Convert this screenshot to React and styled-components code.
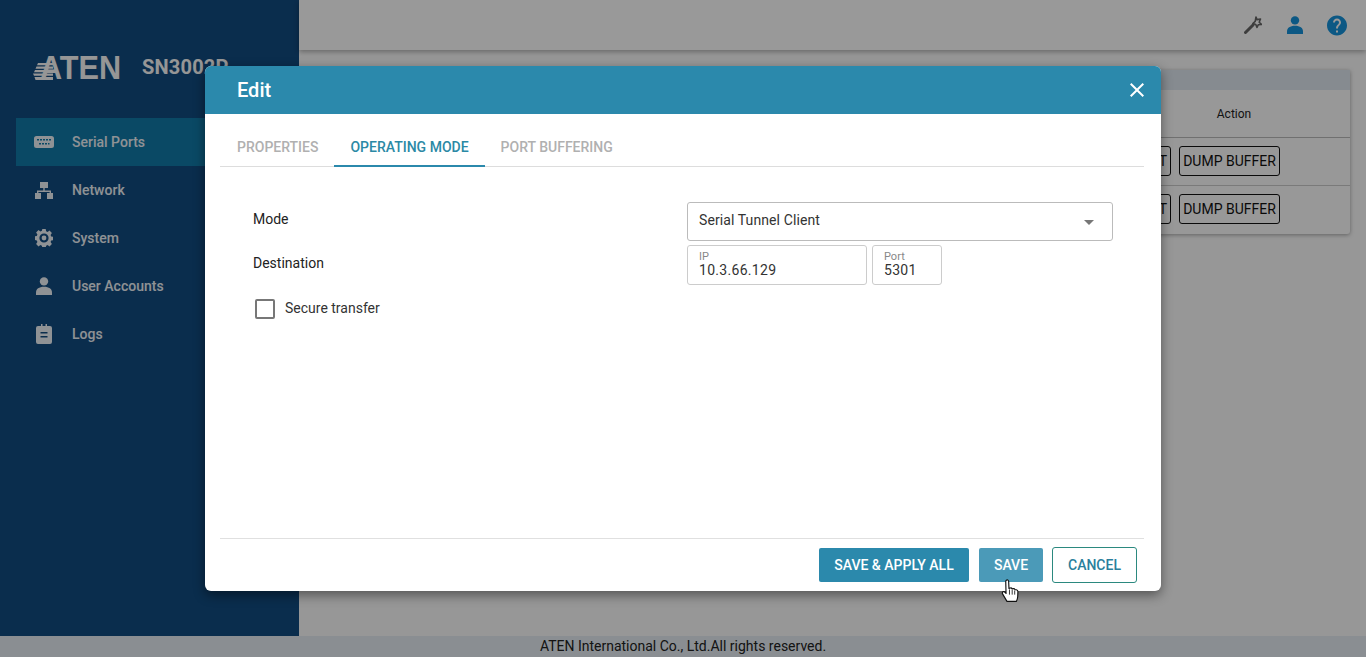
import React from "react";
import styled, { createGlobalStyle } from "styled-components";
import { MdHelp, MdClose, MdArrowDropDown } from "react-icons/md";

const Global = createGlobalStyle`
  html, body { margin: 0; padding: 0; height: 100%; overflow: hidden; }
  body { font-family: Roboto, "Liberation Sans", sans-serif; color: #222; background: #fff; }
  * { box-sizing: border-box; }
`;

const Page = styled.div`height: 657px; display: flex; flex-direction: column; position: relative; overflow: hidden;`;
const Body = styled.div`flex: 1; display: flex; min-height: 0;`;
const Sidebar = styled.aside`width: 299px; background: #124b80; color: #eef3f8; display: flex; flex-direction: column; padding: 0 0 0 16px;`;
const Brand = styled.div`height: 118px; flex: none; display: flex; align-items: center; padding: 16px 0 0 17px;`;
const LogoMark = styled.span`display: flex; align-items: center; width: 109px; color: #fafafa;`;
const LogoText = styled.span`display: inline-block; font: 700 34px/1 "Liberation Sans", sans-serif; margin-left: -13px; transform: scaleX(.9); transform-origin: left;`;
const LogoGlyph = styled.svg`margin-top: 8px; flex: none;`;
const Model = styled.span`font: 700 20px/1 Roboto, sans-serif; color: #fafafa; letter-spacing: .2px;`;
const Nav = styled.nav`display: flex; flex-direction: column;`;
const NavItem = styled.div`height: 48px; display: flex; align-items: center; padding-left: 17px; gap: 17px; font-size: 14px; font-weight: 500; background: ${p => p.$active ? "#127aa8" : "transparent"};`;
const NavIcon = styled.span`width: 22px; height: 24px; display: flex; align-items: center; justify-content: center;`;

const Main = styled.main`flex: 1; display: flex; flex-direction: column; min-width: 0; background: #fcfcfc;`;
const TopBar = styled.header`height: 50px; flex: none; background: #fff; box-shadow: 0 2px 5px rgba(0,0,0,.3); display: flex; justify-content: flex-end; align-items: center; padding-right: 17px; gap: 18px;`;
const TopIcon = styled.span`width: 24px; height: 24px; display: flex; align-items: center; justify-content: center; font-size: ${p => p.$size || 24}px; color: ${p => p.$color};`;
const Content = styled.div`padding: 20px 16px;`;
const Card = styled.section`background: #fdfdfd; box-shadow: 0 1px 4px rgba(0,0,0,.35); border-radius: 0 0 3px 3px;`;
const CardBand = styled.div`height: 20px; background: #dfe8f1;`;
const HeadRow = styled.div`height: 48px; display: flex; justify-content: flex-end; align-items: center; border-bottom: 1px solid #bbb; font-size: 12px; font-weight: 400;`;
const ActionHead = styled.span`width: 232px; text-align: center;`;
const BodyRow = styled.div`height: 48px; display: flex; justify-content: flex-end; align-items: center; gap: 8px; padding: 0 70px ${p => p.$last ? 2 : 1}px 0; border-bottom: ${p => p.$last ? "none" : "1px solid #ccc"};`;
const OutlineBtn = styled.button`height: 30px; padding: 0 3px; font: 400 14px Roboto, sans-serif; background: transparent; color: #111; border: 1px solid #111; border-radius: 3px; width: ${p => p.$w ? p.$w + "px" : "auto"};`;

const Footer = styled.footer`height: 21px; flex: none; background: #e6edf4; text-align: center; font-size: 14px; line-height: 21px; color: #222;`;
const Overlay = styled.div`position: absolute; inset: 0; background: rgba(0,0,0,.4);`;

const Modal = styled.div`position: absolute; left: 205px; top: 66px; width: 956px; height: 525px; background: #fff; border-radius: 6px; box-shadow: 0 4px 12px rgba(0,0,0,.45); display: flex; flex-direction: column; overflow: hidden;`;
const ModalHead = styled.div`height: 48px; flex: none; background: #2b89ac; color: #fff; display: flex; align-items: center; justify-content: space-between; padding: 0 12px 0 32px; font-size: 20px; font-weight: 500;`;
const CloseBox = styled.span`font-size: 24px; display: flex; align-items: center;`;
const Tabs = styled.div`margin: 0 17px 0 15px; height: 53px; flex: none; display: flex; align-items: flex-end; border-bottom: 1px solid #ddd;`;
const Tab = styled.div`height: 53px; margin-bottom: -1px; padding: 15px 16px 0; display: flex; align-items: center; font-size: 14px; font-weight: 500; text-transform: uppercase; color: ${p => p.$active ? "#2b89a5" : "#b0b0b0"}; border-bottom: 2px solid ${p => p.$active ? "#2b89ac" : "transparent"}; ${p => p.$first && "margin-left: 1px;"}`;
const Form = styled.div`flex: 1; padding: 35px 48px 0; display: flex; flex-direction: column;`;
const FormRow = styled.div`display: grid; grid-template-columns: 434px 426px; align-items: center; margin-bottom: 4px;`;
const FieldLabel = styled.label`font-size: 14px; color: #222; padding-bottom: 5px;`;
const SelectBox = styled.div`height: 39px; border: 1px solid #bbb; border-radius: 3px; display: flex; align-items: center; justify-content: space-between; padding: 0 11px 3px; font-size: 14px; letter-spacing: .1px; color: #333;`;
const Caret = styled.span`font-size: 24px; color: #777; display: flex; margin-top: 3px;`;
const Pair = styled.div`display: flex; gap: 5px;`;
const Input = styled.div`width: ${p => p.$w}px; height: 40px; border: 1px solid #ccc; border-radius: 3px; padding: 5px 11px 0; display: flex; flex-direction: column;`;
const InputLabel = styled.span`font-size: 11px; line-height: 11px; color: #888;`;
const InputValue = styled.span`font-size: 14px; line-height: 16px; letter-spacing: .3px; color: #333;`;
const CheckRow = styled.div`display: flex; align-items: center; gap: 10px; margin: 10px 0 0 2px; font-size: 14px; color: #333;`;
const Check = styled.span`width: 20px; height: 20px; border: 2px solid #777; border-radius: 2px;`;
const CheckText = styled.span`padding-bottom: 2px;`;
const ModalFoot = styled.div`margin: 0 17px 0 15px; height: 53px; flex: none; border-top: 1px solid #e0e0e0; display: flex; justify-content: flex-end; align-items: center; gap: 10px; padding: 0 7px 1px 0;`;
const Btn = styled.button`width: ${p => p.$w}px; height: 34px; border: 0; border-radius: 2px; background: ${p => p.$bg}; color: #fff; font: 500 14px Roboto, sans-serif; padding: 0;`;
const CancelBtn = styled.button`width: 85px; height: 36px; margin-left: -1px; border: 1px solid #2b897f; border-radius: 3px; background: #fff; color: #2b7f9c; font: 500 14px Roboto, sans-serif; padding: 0;`;
const Cursor = styled.svg`position: absolute; left: 1001px; top: 579px; width: 18px; height: 25px;`;

const SerialIcon = () => (
  <svg width="20" height="12" viewBox="0 0 20 12" fill="currentColor">
    <path fillRule="evenodd" d="M2.5 0h15A2.5 2.5 0 0 1 20 2.5v7a2.5 2.5 0 0 1-2.5 2.5h-15A2.5 2.5 0 0 1 0 9.5v-7A2.5 2.5 0 0 1 2.5 0ZM3 3v1.5h2V3Zm3 0v1.5h2V3Zm3 0v1.5h2V3Zm3 0v1.5h2V3Zm3 0v1.5h2V3ZM5 7v1.5h2V7Zm3 0v1.5h2V7Zm3 0v1.5h2V7Zm3 0v1.5h1.5V7Z" />
  </svg>
);
const NetworkIcon = () => (
  <svg width="18" height="17" viewBox="0 0 18 17" fill="currentColor">
    <path d="M5 0h8v6H5zM8.3 6h1.4v3H8.3zM2 8.5h14V11h-1.4V9.9H3.4V11H2zM0 11h6v6H0zM12 11h6v6h-6z" />
  </svg>
);
const GearIcon = () => (
  <svg width="18" height="18" viewBox="0 0 18 18" fill="currentColor">
    <path fillRule="evenodd" d="M7.3 0h3.4l.4 2.3 1.5.6 1.9-1.3 2.4 2.4-1.3 1.9.6 1.5 2.3.4v3.4l-2.3.4-.6 1.5 1.3 1.9-2.4 2.4-1.9-1.3-1.5.6-.4 2.3H7.3l-.4-2.3-1.5-.6-1.9 1.3-2.4-2.4 1.3-1.9-.6-1.5L-.5 10.7V7.3l2.3-.4.6-1.5-1.3-1.9 2.4-2.4 1.9 1.3 1.5-.6ZM9 4.4a4.6 4.6 0 1 0 0 9.2 4.6 4.6 0 0 0 0-9.2Z" />
    <circle cx="9" cy="9" r="2.4" />
  </svg>
);
const UserIcon = ({ size = 18 }) => (
  <svg width={size} height={size} viewBox="0 0 18 18" fill="currentColor">
    <circle cx="9" cy="4.4" r="4.2" />
    <path d="M1 18v-2.6C1 12 4 9.8 9 9.8s8 2.2 8 5.6V18Z" />
  </svg>
);
const ClipboardIcon = () => (
  <svg width="16" height="20" viewBox="0 0 16 20" fill="currentColor">
    <path fillRule="evenodd" d="M5 0h1.5v2h3V0H11v2h3a2 2 0 0 1 2 2v14a2 2 0 0 1-2 2H2a2 2 0 0 1-2-2V4a2 2 0 0 1 2-2h3Zm-.5 8v1.6h7V8Zm0 4v1.6h7V12Z" />
  </svg>
);
const WandIcon = () => (
  <svg width="18" height="18" viewBox="0 0 18 18" fill="none">
    <path d="M1.5 16.5 9 9" stroke="currentColor" strokeWidth="3" strokeLinecap="round" />
    <path d="M12 1l1 2.6 3.5-.6-1.3 3.2L17.5 8.5l-3.2.2L13 11.5l-1.2-3L8.8 7.5l2.4-2.2Z" stroke="currentColor" strokeWidth="1.6" strokeLinejoin="round" />
  </svg>
);
const LogoStripes = () => (
  <LogoGlyph width="20" height="17" viewBox="0 0 20 17" fill="currentColor">
    <path d="M5 0h15v2.2H4ZM3.5 3.5H20v2.2H2.5ZM2 7h18v2.2H1ZM0 10.5h20v2.2H1ZM1.5 14H20v3H2.5Z" />
  </LogoGlyph>
);

export default function App() {
  return (
    <Page>
      <Global />
      <Body>
        <Sidebar>
          <Brand>
            <LogoMark><LogoStripes /><LogoText>ATEN</LogoText></LogoMark>
            <Model>SN3002P</Model>
          </Brand>
          <Nav>
            <NavItem $active><NavIcon><SerialIcon /></NavIcon>Serial Ports</NavItem>
            <NavItem><NavIcon><NetworkIcon /></NavIcon>Network</NavItem>
            <NavItem><NavIcon><GearIcon /></NavIcon>System</NavItem>
            <NavItem><NavIcon><UserIcon /></NavIcon>User Accounts</NavItem>
            <NavItem><NavIcon><ClipboardIcon /></NavIcon>Logs</NavItem>
          </Nav>
        </Sidebar>
        <Main>
          <TopBar>
            <TopIcon $color="#666"><WandIcon /></TopIcon>
            <TopIcon $color="#1593dc"><UserIcon /></TopIcon>
            <TopIcon $color="#1593dc" $size={25}><MdHelp /></TopIcon>
          </TopBar>
          <Content>
            <Card>
              <CardBand />
              <HeadRow><ActionHead>Action</ActionHead></HeadRow>
              <BodyRow><OutlineBtn>RESET</OutlineBtn><OutlineBtn $w={101}>DUMP BUFFER</OutlineBtn></BodyRow>
              <BodyRow $last><OutlineBtn>RESET</OutlineBtn><OutlineBtn $w={101}>DUMP BUFFER</OutlineBtn></BodyRow>
            </Card>
          </Content>
        </Main>
      </Body>
      <Footer>ATEN International Co., Ltd.All rights reserved.</Footer>
      <Overlay />
      <Modal>
        <ModalHead>Edit<CloseBox><MdClose /></CloseBox></ModalHead>
        <Tabs>
          <Tab $first>Properties</Tab>
          <Tab $active>Operating Mode</Tab>
          <Tab>Port Buffering</Tab>
        </Tabs>
        <Form>
          <FormRow>
            <FieldLabel>Mode</FieldLabel>
            <SelectBox>Serial Tunnel Client<Caret><MdArrowDropDown /></Caret></SelectBox>
          </FormRow>
          <FormRow>
            <FieldLabel>Destination</FieldLabel>
            <Pair>
              <Input $w={180}><InputLabel>IP</InputLabel><InputValue>10.3.66.129</InputValue></Input>
              <Input $w={70}><InputLabel>Port</InputLabel><InputValue>5301</InputValue></Input>
            </Pair>
          </FormRow>
          <CheckRow><Check /><CheckText>Secure transfer</CheckText></CheckRow>
        </Form>
        <ModalFoot>
          <Btn $w={150} $bg="#2b89ac">SAVE &amp; APPLY ALL</Btn>
          <Btn $w={64} $bg="#4b9ab8">SAVE</Btn>
          <CancelBtn>CANCEL</CancelBtn>
        </ModalFoot>
      </Modal>
      <Cursor viewBox="0 0 17 24">
        <path d="M5 1.2c.8-.6 2-.2 2.2 1L7.5 9l1.4-.4c.8-.1 1.4.2 1.6.8l1.3-.1c.8 0 1.3.3 1.5.9l1.2.1c1 .1 1.6.8 1.6 1.8l-.2 5c-.1 1.6-.6 3-1.3 4.4H5.6L1.5 14.5c-.6-1-.4-1.8.3-2.2.8-.4 1.5-.1 2.2.7l.7.9L4.4 2.5c0-.6.2-1 .6-1.3Z" fill="#fff" stroke="#111" strokeWidth="1.1" strokeLinejoin="round" />
        <path d="M8 10v5M10.6 10v5M13 11v4" stroke="#111" strokeWidth=".8" fill="none" />
      </Cursor>
    </Page>
  );
}
